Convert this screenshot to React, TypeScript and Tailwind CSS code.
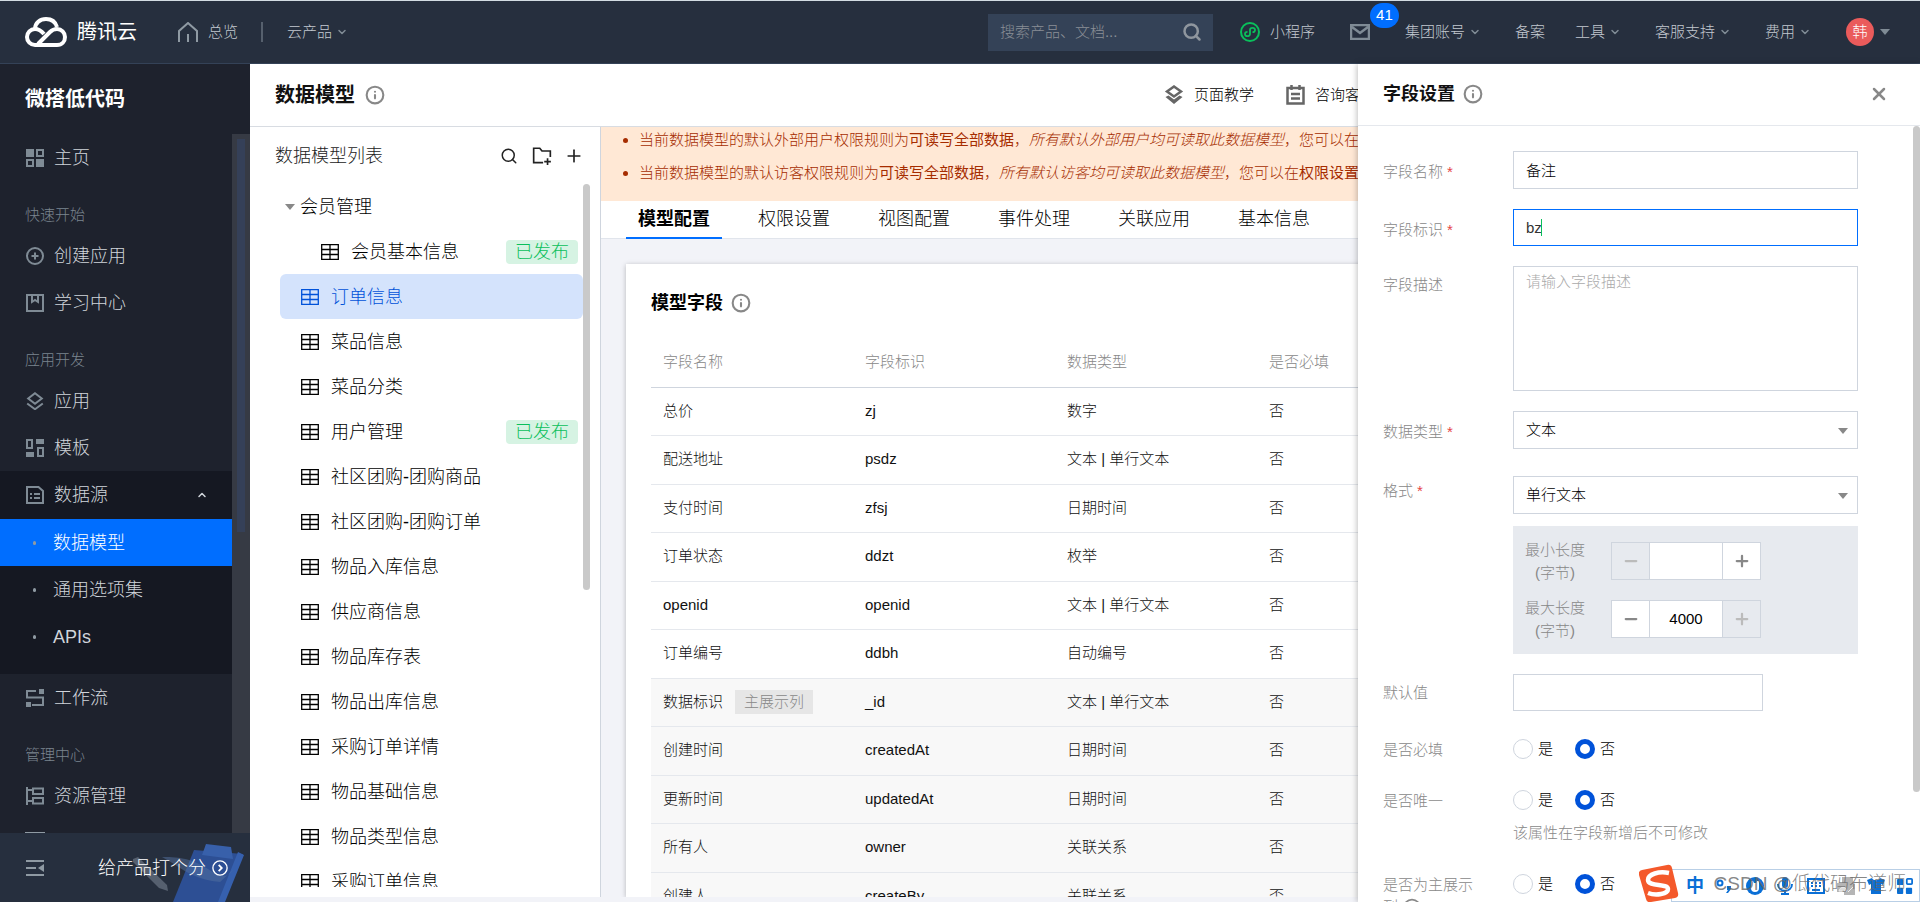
import type { ReactNode } from 'react'
import { ChevronDown, ChevronUp, Info, Minus, Plus, Search, X } from 'lucide-react'

const models = [
  { name: '订单信息', active: true },
  { name: '菜品信息' },
  { name: '菜品分类' },
  { name: '用户管理', published: true },
  { name: '社区团购-团购商品' },
  { name: '社区团购-团购订单' },
  { name: '物品入库信息' },
  { name: '供应商信息' },
  { name: '物品库存表' },
  { name: '物品出库信息' },
  { name: '采购订单详情' },
  { name: '物品基础信息' },
  { name: '物品类型信息' },
  { name: '采购订单信息' },
]

const tabs = ['模型配置', '权限设置', '视图配置', '事件处理', '关联应用', '基本信息']

const fields = [
  { name: '总价', id: 'zj', type: '数字' },
  { name: '配送地址', id: 'psdz', type: '文本 | 单行文本' },
  { name: '支付时间', id: 'zfsj', type: '日期时间' },
  { name: '订单状态', id: 'ddzt', type: '枚举' },
  { name: 'openid', id: 'openid', type: '文本 | 单行文本' },
  { name: '订单编号', id: 'ddbh', type: '自动编号' },
  { name: '数据标识', id: '_id', type: '文本 | 单行文本', system: true, main: true },
  { name: '创建时间', id: 'createdAt', type: '日期时间', system: true },
  { name: '更新时间', id: 'updatedAt', type: '日期时间', system: true },
  { name: '所有人', id: 'owner', type: '关联关系', system: true },
  { name: '创建人', id: 'createBy', type: '关联关系', system: true },
]

/* ---------- アイコン ---------- */

function Icon({ children, className = 'size-[18px]' }: { children: ReactNode; className?: string }) {
  return (
    <svg viewBox="0 0 18 18" fill="none" stroke="currentColor" strokeWidth="2" className={`shrink-0 ${className}`} aria-hidden="true">
      {children}
    </svg>
  )
}

function TableIcon() {
  return (
    <Icon>
      <path strokeWidth="1.3" d="M.7 1.7h16.6v14.6H.7zM.7 6.5h16.6M.7 11.5h16.6M9 1.7v14.6" />
    </Icon>
  )
}

const icons = {
  home: (
    <Icon>
      <path d="M0 0h8v8H0zM10 10h8v8h-8z" fill="currentColor" stroke="none" />
      <path d="M11 1h6v6h-6zM1 11h6v6H1z" />
    </Icon>
  ),
  create: (
    <Icon>
      <circle cx="9" cy="9" r="8" />
      <path d="M9 5.5v7M5.5 9h7" />
    </Icon>
  ),
  learn: (
    <Icon>
      <path d="M1 1h16v16H1zM6 1v7l3-2 3 2V1" />
    </Icon>
  ),
  layers: (
    <Icon>
      <path d="M9 1.2 15.8 6.5 9 11.8 2.2 6.5zM1.2 11.5 9 17.2l7.8-5.7" />
    </Icon>
  ),
  template: (
    <Icon>
      <path d="M1 1h5v8H1zM12 9h5v8h-5z" />
      <path d="M10 0h8v5h-8zM0 13h8v5H0z" fill="currentColor" stroke="none" />
    </Icon>
  ),
  source: (
    <Icon>
      <path d="M1 1h11.5L17 5v12H1zM4 8h2M8 8h6M4 12h2M8 12h6" />
    </Icon>
  ),
  flow: (
    <Icon>
      <path d="M10 2H1v6.5h16V16H6" />
      <path d="M13 0h5v5h-5zM0 13h5v5H0z" fill="currentColor" stroke="none" />
    </Icon>
  ),
  resource: (
    <Icon>
      <path d="M1 0v18M1 3h5M1 14h5M7 1.5h10V7H7zM7 11h10v5.5H7z" />
    </Icon>
  ),
}

function CloudLogo() {
  return (
    <svg viewBox="0 0 42 30" className="h-[30px] w-[42px]" fill="none" stroke="#fff" strokeWidth="4" aria-hidden="true">
      <path d="M10 12C10 6 15 2 21 2c5.500 0 9.500 3 11 8" />
      <path d="M15 28h17c5 0 8-3.500 8-8s-3.500-8-8-8c-3 0-5 1-7 3L13 27" />
      <path d="M19 17c-2.500-3-5-5-9-5-4.500 0-8 3.500-8 8s3.500 8 8 8h8" />
    </svg>
  )
}

function Caret({ className = '' }: { className?: string }) {
  return (
    <svg viewBox="0 0 10 8" className={`h-2 w-2.5 ${className}`} fill="currentColor" aria-hidden="true">
      <path d="M0 1h10L5 7z" />
    </svg>
  )
}

/* ---------- ヘッダー ---------- */

function TopLink({ children, arrow, className = '' }: { children: ReactNode; arrow?: boolean; className?: string }) {
  return (
    <a href="#" className={`flex items-center ${className}`}>
      {children}
      {arrow && <ChevronDown className="ml-1 size-3 text-[#7f8b95]" strokeWidth={3} />}
    </a>
  )
}

function TopBar() {
  return (
    <header className="flex h-16 shrink-0 items-center border-t border-b border-t-[#d3dce2] border-b-[#344257] bg-[#262f3e] pl-[25px] text-[15px] whitespace-nowrap text-[#c3c9d0]">
      <a href="#" className="flex items-center gap-2.5 text-xl font-normal text-white">
        <CloudLogo />
        腾讯云
      </a>
      <TopLink className="ml-[41px] gap-2.5">
        <svg viewBox="0 0 20 20" className="size-5" fill="none" stroke="#8f9aa3" strokeWidth="2" aria-hidden="true">
          <path d="M1 20V9l9-8 9 8v11M10 12v8" />
        </svg>
        总览
      </TopLink>
      <span className="ml-[23px] h-5 w-0.5 bg-[#56606d]" />
      <TopLink arrow className="ml-6">云产品</TopLink>

      <div className="ml-auto flex h-[37px] w-[225px] items-center bg-[#344257] pr-[11px] pl-3">
        <input
          aria-label="搜索"
          placeholder="搜索产品、文档..."
          className="min-w-0 flex-1 bg-transparent outline-none placeholder:text-[#8a8f96]"
        />
        <Search className="size-5 text-[#8f969e]" strokeWidth={3} />
      </div>
      <TopLink className="ml-[27px] gap-2.5">
        <svg viewBox="0 0 20 20" className="size-5" fill="none" stroke="#0abf5b" strokeWidth="2" aria-hidden="true">
          <circle cx="10" cy="10" r="9" />
          <path d="M7.500 9.800C5.500 9.800 5 11 5 12s1 2.200 2.400 2.200S10 13 10 12V8c0-1.200 1-2.200 2.500-2.200S15 7 15 8s-1 2.200-2.500 2.200" strokeWidth="1.800" />
        </svg>
        小程序
      </TopLink>
      <button aria-label="消息" className="relative ml-[35px]">
        <svg viewBox="0 0 20 16" className="h-4 w-5" fill="none" stroke="#7f8b95" strokeWidth="2.500" aria-hidden="true">
          <path d="M1 1h18v14H1zM2 3l8 6 8-6" />
        </svg>
        <span className="absolute bottom-3 left-5 flex h-[25px] w-[29px] items-center justify-center rounded-full bg-[#006eff] text-white">41</span>
      </button>
      <TopLink arrow className="ml-[35px]">集团账号</TopLink>
      <TopLink className="ml-[34px]">备案</TopLink>
      <TopLink arrow className="ml-[30px]">工具</TopLink>
      <TopLink arrow className="ml-[34px]">客服支持</TopLink>
      <TopLink arrow className="ml-[34px]">费用</TopLink>
      <button className="mr-[30px] ml-[35px] flex items-center gap-1.5 text-[#7f8b95]">
        <span className="flex size-7 items-center justify-center rounded-full bg-[#ea5b5b] text-white">韩</span>
        <Caret />
      </button>
    </header>
  )
}

/* ---------- サイドバー ---------- */

function NavItem({ icon, children }: { icon: ReactNode; children: ReactNode }) {
  return (
    <a href="#" className="flex h-[47px] items-center gap-2.5 pl-[26px]">
      <span className="text-[#7f8b95]">{icon}</span>
      {children}
    </a>
  )
}

function NavLabel({ children }: { children: ReactNode }) {
  return <h2 className="h-[51px] pt-[18px] pl-[25px] text-[15px] leading-8 text-[#7b858f]">{children}</h2>
}

function NavSub({ active, children }: { active?: boolean; children: ReactNode }) {
  return (
    <a href="#" className={`flex h-[47px] items-center pl-[33px] ${active ? 'bg-[#006eff] text-white' : ''}`}>
      <span className="mr-[17px] h-1 w-[3px] rounded-full bg-[#8f9aa3]" />
      {children}
    </a>
  )
}

function Sidebar() {
  return (
    <aside className="flex w-[250px] shrink-0 flex-col bg-[#1e222d] text-lg whitespace-nowrap text-[#d0d5db]">
      <h1 className="h-[70px] shrink-0 pl-[25px] text-xl leading-[70px] font-bold text-white">微搭低代码</h1>
      <div className="flex min-h-0 flex-1">
        <nav className="flex-1 overflow-hidden">
          <NavItem icon={icons.home}>主页</NavItem>
          <NavLabel>快速开始</NavLabel>
          <NavItem icon={icons.create}>创建应用</NavItem>
          <NavItem icon={icons.learn}>学习中心</NavItem>
          <NavLabel>应用开发</NavLabel>
          <NavItem icon={icons.layers}>应用</NavItem>
          <NavItem icon={icons.template}>模板</NavItem>
          <div className="bg-[#151822] pb-3.5">
            <button className="flex h-12 w-full items-center gap-2.5 pr-6 pl-[26px]">
              <span className="text-[#7f8b95]">{icons.source}</span>
              数据源
              <ChevronUp className="ml-auto size-3" strokeWidth={3} />
            </button>
            <NavSub active>数据模型</NavSub>
            <NavSub>通用选项集</NavSub>
            <NavSub>APIs</NavSub>
          </div>
          <NavItem icon={icons.flow}>工作流</NavItem>
          <NavLabel>管理中心</NavLabel>
          <NavItem icon={icons.resource}>资源管理</NavItem>
          <div className="mt-[13px] ml-[25px] h-4 w-5 border-2 border-t border-[#8f9aa3]" />
        </nav>
        <div className="w-[18px] bg-[#363a44] pt-[5px]">
          <div className="mx-auto h-[393px] w-2 bg-[#354058]" />
        </div>
      </div>
      <div className="relative flex h-[69px] shrink-0 items-center bg-[#262f3e] pr-[22px] pl-[26px] text-white">
        <svg viewBox="0 0 150 58" className="absolute right-0 bottom-0 h-[58px] w-[150px]" aria-hidden="true">
          <path d="M33 15l5-2 29 28 1 6-9-3-26-26z" fill="#56606f" />
          <path d="M94 6l49 4-20 48H73z" fill="#2d4f94" />
          <path d="M138 8l6 3-19 47h-7z" fill="#3660ae" />
          <path d="M62 13c20 0 30 2 46 12s20 8 26 0L120 38c-22-2-34-10-46-18z" fill="#54719f" opacity=".5" />
          <path d="M106 0l25 3 2 12-31-4z" fill="#3860aa" />
        </svg>
        <button aria-label="收起" className="relative text-[#8f9aa3]">
          <Icon>
            <path d="M0 2h18M0 9h10M0 16h18" />
            <path d="M18 5v8l-6-4z" fill="currentColor" stroke="none" />
          </Icon>
        </button>
        <a href="#" className="relative ml-auto flex items-center gap-1.5">
          给产品打个分
          <Icon className="size-4">
            <circle cx="9" cy="9" r="8" strokeWidth="1.500" />
            <path d="M7.500 5.500 11 9l-3.500 3.500" />
          </Icon>
        </a>
      </div>
    </aside>
  )
}

/* ---------- モデル一覧 ---------- */

function Published() {
  return <span className="ml-auto h-6 rounded-sm bg-[#d6f3e3] px-[9px] leading-6 text-[#0abf5b]">已发布</span>
}

function ModelList() {
  return (
    <section className="flex w-[351px] shrink-0 flex-col border-r border-[#cfd5de] pb-2.5 text-lg text-black">
      <div className="flex h-[57px] shrink-0 items-center pr-4 pl-[25px] text-[#222]">
        <h2>数据模型列表</h2>
        <button aria-label="搜索" className="ml-auto"><Search className="size-[18px]" strokeWidth={2} /></button>
        <button aria-label="新建文件夹" className="ml-3.5">
          <Icon className="size-5">
            <path strokeWidth="1.500" d="M10 15H1.500V2H7l2 2.500h7.500V10M14 11v6M11 14h6" />
          </Icon>
        </button>
        <button aria-label="新建" className="ml-3"><Plus className="size-5" strokeWidth={2} /></button>
      </div>
      <div className="flex min-h-0 flex-1">
        <ul className="ml-[30px] flex-1 overflow-hidden">
          <li className="flex h-[45px] items-center gap-[5px] pl-[5px]">
            <Caret className="text-[#888]" />
            会员管理
          </li>
          <li className="flex h-[45px] items-center gap-3 pr-[5px] pl-[41px]">
            <TableIcon />
            会员基本信息
            <Published />
          </li>
          {models.map((m) => (
            <li
              key={m.name}
              className={`flex h-[45px] items-center gap-3 rounded-md pr-[5px] pl-[21px] ${m.active ? 'bg-[#d4e3fc] text-[#0052d9]' : ''}`}
            >
              <TableIcon />
              {m.name}
              {m.published && <Published />}
            </li>
          ))}
        </ul>
        <div className="mr-[10px] h-[406px] w-[7px] rounded-full bg-[#c9c9c9]" />
      </div>
    </section>
  )
}

/* ---------- モデル設定 ---------- */

function ModelConfig() {
  return (
    <section className="flex min-w-0 flex-1 flex-col overflow-hidden bg-[#f2f3f8] text-[15px] whitespace-nowrap">
      <ul className="h-[74px] shrink-0 list-disc bg-[#ffe8d5] pl-[38px] leading-[33px] text-[#a62c00]">
        <li className="-mt-1">
          当前数据模型的默认外部用户权限规则为<b>可读写全部数据</b>，<i>所有默认外部用户均可读取此数据模型</i>，您可以在
        </li>
        <li>
          当前数据模型的默认访客权限规则为<b>可读写全部数据</b>，<i>所有默认访客均可读取此数据模型</i>，您可以在<b>权限设置</b>
        </li>
      </ul>
      <div role="tablist" className="flex h-[38px] shrink-0 gap-6 border-b border-[#e1e5ec] bg-white pl-[25px] text-lg text-black">
        {tabs.map((t, i) => (
          <button key={t} role="tab" aria-selected={i === 0} className={`h-[38px] border-b-2 px-3 leading-9 ${i === 0 ? 'border-[#006eff] font-bold' : 'border-transparent'}`}>
            {t}
          </button>
        ))}
      </div>
      <div className="mx-[25px] mt-[25px] flex-1 overflow-hidden bg-white px-[25px] pt-5 shadow-[0_1px_5px_rgba(0,0,0,0.25)]">
        <h3 className="flex h-[38px] items-center gap-2 text-lg font-bold text-black">
          模型字段
          <Info className="size-5 text-[#888]" strokeWidth={2.5} />
        </h3>
        <table className="mt-[15px] w-full table-fixed text-left text-[#111]">
          <thead>
            <tr className="h-[50px] border-b border-[#cfd5de] text-[#888]">
              <th className="w-[202px] pl-3 font-light">字段名称</th>
              <th className="w-[202px] pl-3 font-light">字段标识</th>
              <th className="w-[202px] pl-3 font-light">数据类型</th>
              <th className="pl-3 font-light">是否必填</th>
            </tr>
          </thead>
          <tbody>
            {fields.map((f) => (
              <tr key={f.id} className={`odd:h-12 even:h-[49px] border-b border-[#e5e8ed] ${f.system ? 'bg-[#f8f8f8]' : ''}`}>
                <td className="pl-3">
                  {f.name}
                  {f.main && <span className="ml-3 inline-block bg-[#e6e6e6] px-[9px] leading-6 text-[#888]">主展示列</span>}
                </td>
                <td className="pl-3">{f.id}</td>
                <td className="pl-3">{f.type}</td>
                <td className="pl-3">否</td>
              </tr>
            ))}
          </tbody>
        </table>
      </div>
    </section>
  )
}

/* ---------- フィールド設定ドロワー ---------- */

function Label({ id, required, className = 'pt-2.5', children }: { id: string; required?: boolean; className?: string; children: ReactNode }) {
  return (
    <label id={`${id}-label`} htmlFor={id} className={`w-[130px] shrink-0 text-[#888] ${className}`}>
      {children}
      {required && <span className="ml-1 text-[#e54545]">*</span>}
    </label>
  )
}

function SelectBox({ id, value }: { id: string; value: string }) {
  return (
    <div className="relative w-[345px]">
      <select id={id} className="h-[38px] w-full appearance-none border border-[#cfd5de] bg-white px-3 text-black outline-none">
        <option>{value}</option>
      </select>
      <Caret className="pointer-events-none absolute top-4 right-2.5 text-[#888]" />
    </div>
  )
}

function Radios({ name }: { name: string }) {
  const box = 'size-5 appearance-none rounded-full border border-[#cfd5de] checked:border-5 checked:border-[#0052d9]'
  return (
    <div role="radiogroup" aria-labelledby={`${name}-label`} className="flex h-5 gap-[22px] text-black">
      <label className="flex items-center gap-[5px]">
        <input id={name} type="radio" name={name} className={box} />是
      </label>
      <label className="flex items-center gap-[5px]">
        <input type="radio" name={name} defaultChecked className={box} />否
      </label>
    </div>
  )
}

function Stepper({ id, label, value, min, max }: { id: string; label: string; value: string; min?: boolean; max?: boolean }) {
  const off = 'bg-[#e7eaef] text-[#bbb]'
  const on = 'bg-white text-[#888]'
  return (
    <div className="flex gap-[26px]">
      <label htmlFor={id} className="w-[60px] text-center leading-[23px] text-[#888]">
        {label}
        <br />
        (字节)
      </label>
      <div className="mt-1 flex h-[38px] w-[150px] border border-[#cfd5de]">
        <button disabled={min} aria-label="减少" className={`flex w-[37px] items-center justify-center ${min ? off : on}`}>
          <Minus className="size-[18px]" strokeWidth={3} />
        </button>
        <input id={id} defaultValue={value} className="w-[74px] border-x border-[#cfd5de] bg-white text-center text-black outline-none" />
        <button disabled={max} aria-label="增加" className={`flex w-[37px] items-center justify-center ${max ? off : on}`}>
          <Plus className="size-[18px]" strokeWidth={3} />
        </button>
      </div>
    </div>
  )
}

function Drawer() {
  return (
    <aside className="absolute inset-y-0 right-0 flex w-[562px] flex-col bg-white text-[15px] leading-[22px] shadow-[-1px_0_6px_rgba(0,0,0,0.25)]">
      <div className="flex h-[62px] shrink-0 items-center border-b border-[#e5e8ed] pr-[31px] pb-0.5 pl-[25px]">
        <h2 className="text-lg font-bold text-[#111]">字段设置</h2>
        <Info className="ml-2 size-5 text-[#888]" strokeWidth={2.5} />
        <button aria-label="关闭" className="ml-auto"><X className="size-5 text-[#888]" strokeWidth={3} /></button>
      </div>
      <div className="flex min-h-0 flex-1">
        <form className="flex-1 overflow-hidden pt-[25px] pl-[25px]">
          <div className="mb-5 flex">
            <Label id="name" required>字段名称</Label>
            <input id="name" defaultValue="备注" className="h-[38px] w-[345px] border border-[#cfd5de] px-3 pb-0.5 text-black outline-none" />
          </div>
          <div className="mb-5 flex">
            <Label id="key" required>字段标识</Label>
            <div className="relative">
              <input id="key" defaultValue="bz" className="h-[37px] w-[345px] border border-[#006eff] px-3 text-[#333] outline-none" />
              <span className="absolute top-2.5 left-7 h-[17px] w-px bg-[#0abf5b]" />
            </div>
          </div>
          <div className="mb-5 flex">
            <Label id="desc" className="pt-2">字段描述</Label>
            <textarea id="desc" placeholder="请输入字段描述" className="h-[125px] w-[345px] resize-none border border-[#cfd5de] px-3 py-1 outline-none placeholder:text-[#aaa]" />
          </div>
          <div className="mb-[27px] flex">
            <Label id="type" required>数据类型</Label>
            <SelectBox id="type" value="文本" />
          </div>
          <div className="mb-5 flex">
            <Label id="format" required className="pt-1">格式</Label>
            <div>
              <SelectBox id="format" value="单行文本" />
              <div className="mt-3 flex h-32 flex-col gap-3 bg-[#e7eaef] px-3 pt-3">
                <Stepper id="min" label="最小长度" value="" min />
                <Stepper id="max" label="最大长度" value="4000" max />
              </div>
            </div>
          </div>
          <div className="mb-7 flex">
            <Label id="default" className="pt-2">默认值</Label>
            <input id="default" className="h-[37px] w-[250px] border border-[#cfd5de] px-3 outline-none" />
          </div>
          <div className="mb-[29px] flex">
            <Label id="required" className="">是否必填</Label>
            <Radios name="required" />
          </div>
          <div className="mb-[30px] flex">
            <Label id="unique" className="">是否唯一</Label>
            <div>
              <Radios name="unique" />
              <p className="mt-3 text-[#888]">该属性在字段新增后不可修改</p>
            </div>
          </div>
          <div className="flex">
            <Label id="main" className="pr-9">
              是否为主展示列
              <Info className="ml-1 inline size-5" />
            </Label>
            <Radios name="main" />
          </div>
        </form>
        <div className="h-[666px] w-[7px] rounded-full bg-[#c9c9c9]" />
      </div>
    </aside>
  )
}

/* ---------- 入力メソッドバー ---------- */

function ImeBar() {
  return (
    <div className="absolute right-0 bottom-0 flex items-end">
      <svg viewBox="0 0 40 38" className="relative z-10 -mr-2 h-[38px] w-10" aria-hidden="true">
        <path d="M3 6 28 1q4-1 5 3l6 25q1 4-3 5L12 38q-4 1-5-3L0 11q-1-4 3-5z" fill="#f4592b" />
        <path d="M30 9C20 7 9 10 9 16c0 7 20 3 20 9 0 5-12 7-20 4" fill="none" stroke="#fff" strokeWidth="4.500" />
      </svg>
      <div className="flex h-[33px] w-[249px] items-center justify-between border border-[#b9cfe6] bg-white pr-1.5 pl-[14px] text-[#0a6fd6]">
        <span className="text-lg font-bold">中</span>
        <svg viewBox="0 0 18 18" className="size-[18px]" fill="currentColor" aria-hidden="true">
          <circle cx="4" cy="6" r="2.500" fill="none" stroke="currentColor" strokeWidth="2" />
          <path d="M11 9h4v3l-3 4h-2l2-3h-1z" />
        </svg>
        <svg viewBox="0 0 18 18" className="size-[18px]" aria-hidden="true">
          <circle cx="9" cy="9" r="9" fill="currentColor" />
          <path d="M5 4h2l1 2h2l1-2h2v7a4 4 0 0 1-8 0z" fill="#fff" />
        </svg>
        <svg viewBox="0 0 18 18" className="size-[18px]" aria-hidden="true">
          <rect x="6" width="6" height="11" rx="3" fill="currentColor" />
          <path d="M2 7c0 9 14 9 14 0M9 13v4M5 17h8" fill="none" stroke="currentColor" strokeWidth="2" />
        </svg>
        <svg viewBox="0 0 18 16" className="h-4 w-[18px]" fill="none" stroke="currentColor" strokeWidth="2" aria-hidden="true">
          <path d="M1 1h16v14H1zM4 5h2M8 5h2M12 5h2M4 8h2M8 8h2M12 8h2M5 12h8" />
        </svg>
        <svg viewBox="0 0 18 18" className="size-[18px]" fill="#b5b5b5" aria-hidden="true">
          <path d="M5 0h11v7h2v11H7v-3H0V6h5z" />
          <path d="M2 14c1-5 7-5 8 0zM11 15l5-5" fill="#ddd" stroke="#eee" />
        </svg>
        <svg viewBox="0 0 18 16" className="h-4 w-[18px]" fill="currentColor" aria-hidden="true">
          <path d="M5 0c1 3 7 3 8 0l5 2-2 5-2-1v10H4V6L2 7 0 2z" />
        </svg>
        <svg viewBox="0 0 18 18" className="size-4" fill="currentColor" aria-hidden="true">
          <rect y="1" width="7" height="7" rx="1" />
          <rect x="11" y="1" width="6" height="6" rx="1" fill="none" stroke="currentColor" strokeWidth="2" />
          <rect y="11" width="7" height="7" rx="1" />
          <rect x="10" y="11" width="7" height="7" rx="1" />
        </svg>
      </div>
      <span className="absolute right-3.5 bottom-1 z-10 text-[19px] leading-7 whitespace-nowrap text-[#666]/80">CSDN @低代码布道师</span>
    </div>
  )
}

export default function App() {
  return (
    <div className="relative flex h-screen flex-col overflow-hidden bg-[#f2f3f8] font-['Liberation_Sans','Noto_Sans_CJK_SC',sans-serif] font-light">
      <TopBar />
      <div className="flex min-h-0 flex-1">
        <Sidebar />
        <main className="relative flex min-w-0 flex-1 flex-col pb-[5px]">
          <div className="flex h-[63px] shrink-0 items-center border-b border-[#d8dce2] bg-white pr-[545px] pl-[25px] text-[15px] text-black">
            <h2 className="text-xl font-bold text-[#111]">数据模型</h2>
            <Info className="ml-2.5 size-5 text-[#888]" strokeWidth={2.5} />
            <a href="#" className="ml-auto flex items-center gap-2.5">
              <svg viewBox="0 0 20 20" className="size-5" fill="none" stroke="#666" strokeWidth="2.500" aria-hidden="true">
                <path d="m10 1.500 7 5-7 5-7-5z" />
                <path d="m1.500 12 8.500 7 8.500-7-3-1.500-5.500 4-5.500-4z" fill="#666" stroke="none" />
              </svg>
              页面教学
            </a>
            <a href="#" className="ml-8 flex items-center gap-2.5">
              <svg viewBox="0 0 19 20" className="h-5 w-[19px]" fill="none" stroke="#666" strokeWidth="2.500" aria-hidden="true">
                <path d="M1.500 3h16v15.500h-16zM5.500 0v5M13.500 0v5M5 9h9M5 13.500h9" />
              </svg>
              咨询客服
            </a>
          </div>
          <div className="flex min-h-0 flex-1 bg-white">
            <ModelList />
            <ModelConfig />
          </div>
          <Drawer />
        </main>
      </div>
      <ImeBar />
    </div>
  )
}
